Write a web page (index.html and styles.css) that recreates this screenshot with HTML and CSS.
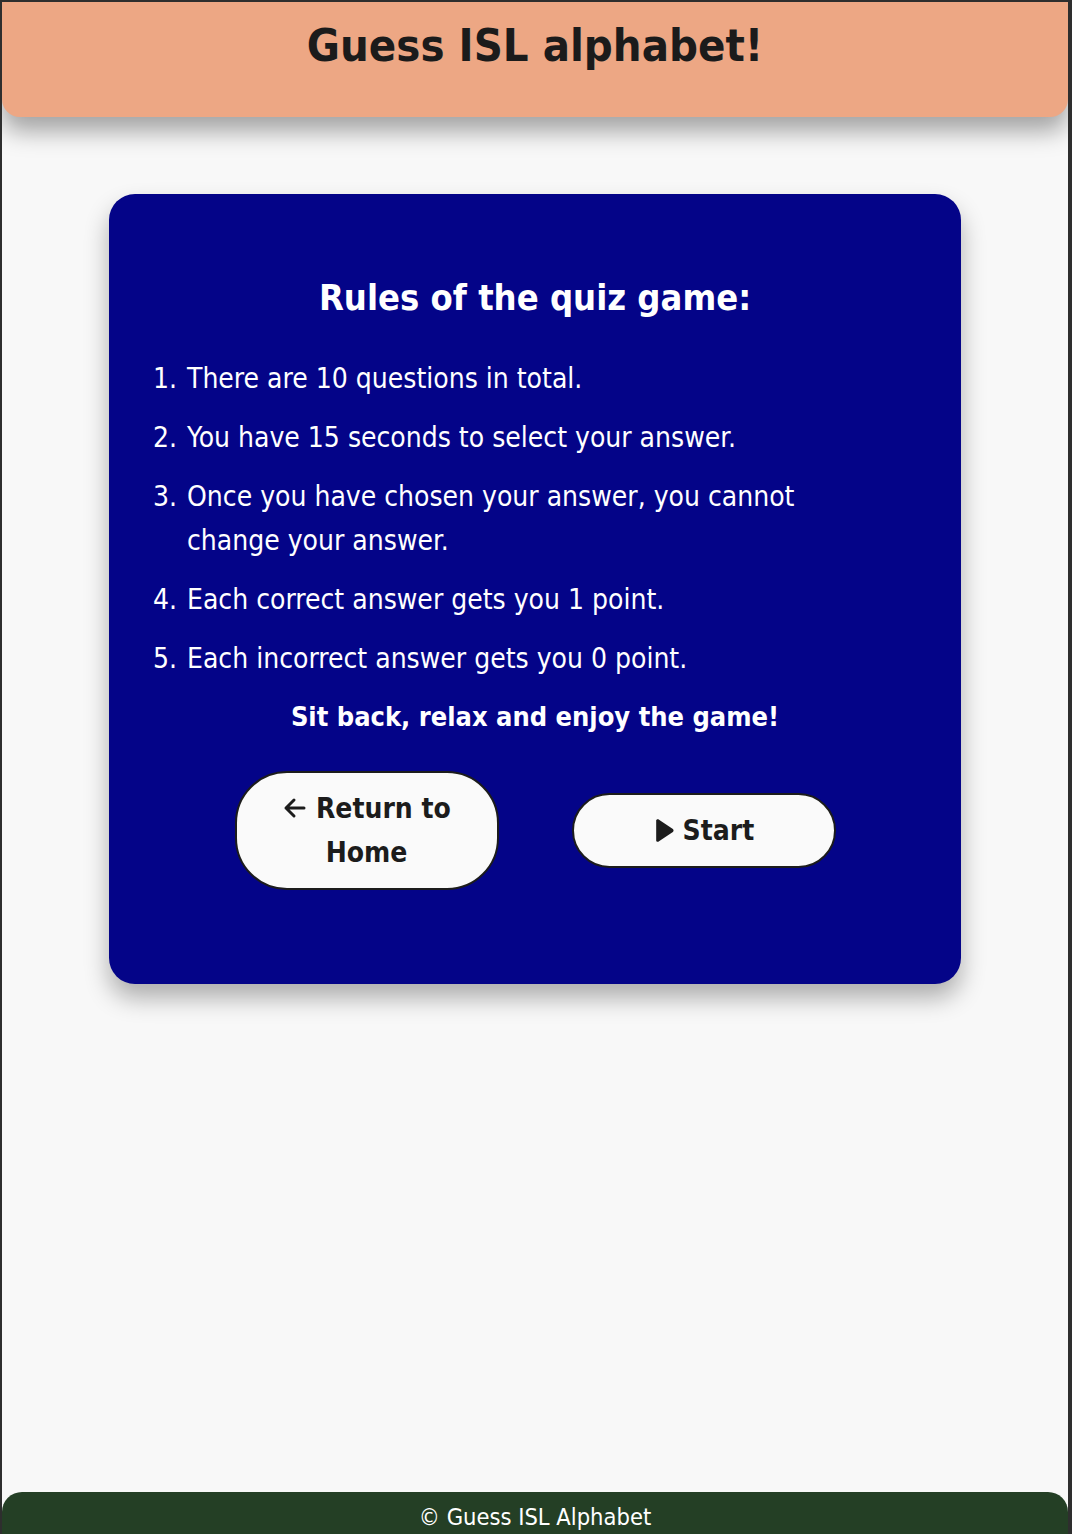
FILE: index.html
```html
<!DOCTYPE html>
<html lang="en">
<head>
<meta charset="utf-8">
<title>Guess ISL alphabet!</title>
<link rel="stylesheet" href="styles.css">
</head>
<body>
<div class="frame">
  <header class="topbar">
    <h1 class="title">Guess ISL alphabet!</h1>
  </header>
  <main class="main">
    <section class="card">
      <h2 class="card-title">Rules of the quiz game:</h2>
      <ol class="rules">
        <li>There are 10 questions in total.</li>
        <li>You have 15 seconds to select your answer.</li>
        <li>Once you have chosen your answer, you cannot change your answer.</li>
        <li>Each correct answer gets you 1 point.</li>
        <li>Each incorrect answer gets you 0 point.</li>
      </ol>
      <p class="enjoy">Sit back, relax and enjoy the game!</p>
      <div class="actions">
        <button class="btn btn-home">
          <svg class="ico-arrow" viewBox="0 0 24 22" width="25" height="22"><path d="M21.5 11H3.5M11.5 3L3.5 11L11.5 19" fill="none" stroke="#1c1c1c" stroke-width="3" stroke-linecap="round" stroke-linejoin="round"/></svg>
          Return to Home
        </button>
        <button class="btn btn-start">
          <svg class="ico-play" viewBox="0 0 20 24" width="21" height="25"><path d="M3 2.5C3 1.4 4.1 0.8 5 1.3L19 10.6C19.9 11.2 19.9 12.8 19 13.4L5 22.7C4.1 23.2 3 22.6 3 21.5Z" fill="#1c1c1c"/></svg>
          Start
        </button>
      </div>
    </section>
  </main>
  <footer class="footer">© Guess ISL Alphabet</footer>
</div>
</body>
</html>
```

FILE: styles.css
```css
html, body {
  margin: 0;
  padding: 0;
  height: 100%;
}
body {
  background: #2e2e2e;
  font-family: "Liberation Sans Narrow", "DejaVu Sans Condensed", "Open Sans", sans-serif;
  font-stretch: condensed;
}
.frame {
  box-sizing: border-box;
  height: 1534px;
  margin: 2px 4px 0 2px;
  background: #f8f8f8;
  display: flex;
  flex-direction: column;
  overflow: hidden;
}
.topbar {
  background: #eda784;
  height: 115px;
  border-radius: 0 0 18px 18px;
  box-shadow: 0 14px 24px rgba(0, 0, 0, 0.35);
  display: flex;
  justify-content: center;
  position: relative;
  z-index: 1;
}
.title {
  margin: 16px 0 0;
  font-size: 45px;
  font-weight: 700;
  color: #1b1b1b;
  line-height: 56px;
}
.main {
  flex: 1;
  display: flex;
  justify-content: center;
  padding-top: 77px;
}
.card {
  box-sizing: border-box;
  width: 852px;
  height: 790px;
  background: #040488;
  border-radius: 26px;
  box-shadow: 0 14px 24px rgba(0, 0, 0, 0.3);
  color: #fff;
  padding: 81px 40px 0 40px;
  display: flex;
  flex-direction: column;
  align-items: center;
}
.card-title {
  margin: 0;
  font-size: 36px;
  line-height: 46px;
  font-weight: 700;
}
.rules {
  align-self: stretch;
  margin: 36px 0 0;
  padding: 0 0 0 36px;
  width: 660px;
  font-size: 28px;
  line-height: 44px;
}
.rules li {
  margin-bottom: 15px;
  padding-left: 2px;
}
.rules li:last-child {
  margin-bottom: 0;
}
.enjoy {
  margin: 14px 0 0;
  font-size: 27px;
  font-weight: 700;
  line-height: 44px;
}
.actions {
  display: flex;
  align-items: center;
  gap: 73px;
  margin-top: 32px;
}
.btn {
  box-sizing: border-box;
  width: 264px;
  background: #fafafa;
  border: 2px solid #1c1c1c;
  color: #1c1c1c;
  font-family: inherit;
  font-stretch: condensed;
  font-size: 28px;
  font-weight: 700;
  line-height: 44px;
  cursor: pointer;
}
.btn-home {
  height: 119px;
  border-radius: 52px;
  padding: 10px 40px;
}
.btn-start {
  height: 75px;
  border-radius: 38px;
}
.ico-arrow {
  vertical-align: -1px;
}
.ico-play {
  vertical-align: -3px;
}
.footer {
  background: #243f25;
  color: #fff;
  height: 44px;
  border-radius: 20px 20px 0 0;
  text-align: center;
  font-size: 23.5px;
  line-height: 50px;
}
```
